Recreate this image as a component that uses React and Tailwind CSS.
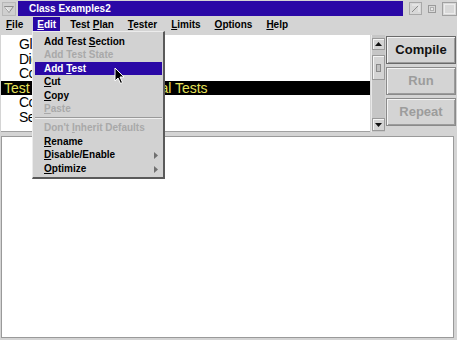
import React from "react";

const BLUE = "bg-[#2a08a6]";

function MenuRow({ children, disabled, active, arrow }) {
  return (
    <div
      className={`relative h-[13.4px] leading-[13.4px] pl-[9px] whitespace-nowrap ${
        active ? "bg-[#2a08a6] text-white" : disabled ? "text-[#a9a9a9]" : "text-black"
      }`}
    >
      {children}
      {arrow && (
        <svg className="absolute left-[119px] top-[4px]" width="4" height="7" viewBox="0 0 4 7">
          <path d="M0 0 L4 3.5 L0 7 Z" fill="#707070" />
        </svg>
      )}
    </div>
  );
}

const U = ({ children }) => <span className="underline underline-offset-[1px] decoration-1">{children}</span>;

function Btn({ children, disabled, def }) {
  return (
    <div
      className={`h-[28px] flex items-center justify-center text-[13px] font-bold bg-[#d4d4d4] border ${
        def ? "border-[#6a6a6a]" : "border-[#8a8a8a]"
      } shadow-[inset_1px_1px_0_#f4f4f4,inset_-1px_-1px_0_#9c9c9c] ${disabled ? "text-[#9c9c9c]" : "text-[#111]"}`}
    >
      {children}
    </div>
  );
}

export default function App() {
  const list = [
    { t: "Global", indent: true },
    { t: "Digital", indent: true },
    { t: "Compile", indent: true },
    { t: "Test Section: All Functional Tests", sel: true },
    { t: "Compile", indent: true },
    { t: "Setup", indent: true },
  ];
  return (
    <div className="w-[457px] h-[340px] bg-[#d4d4d4] relative overflow-hidden font-['Liberation_Sans',Arial,sans-serif] select-none">
      {/* Title bar */}
      <div className="flex items-center h-[17px] pl-[2px]">
        <svg width="14" height="14" viewBox="0 0 14 14">
          <rect x="0.5" y="0.5" width="13" height="13" fill="#cfcfcf" stroke="#b8b8b8" />
          <path d="M2.5 4.5 H11.5 L7 10.5 Z" fill="#dadada" stroke="#8c8c8c" />
          <path d="M3.5 5 L7 9.5" stroke="#f6f6f6" />
        </svg>
        <div className={`ml-[2px] w-[386px] h-[15px] ${BLUE} text-white text-[10px] font-bold leading-[15px] pl-[11px]`}>
          Class Examples2
        </div>
        <div className="flex items-center ml-[6px] gap-[4px]">
          <svg width="13" height="13" viewBox="0 0 13 13">
            <rect x="0.5" y="0.5" width="12" height="12" fill="#d8d8d8" stroke="#a8a8a8" />
            <path d="M3 10 L10 3" stroke="#8c8c8c" />
            <path d="M3 3 H10 V10" fill="none" stroke="#f0f0f0" />
          </svg>
          <svg width="12" height="13" viewBox="0 0 12 13">
            <rect x="2.5" y="3.5" width="7" height="7" fill="#d8d8d8" stroke="#9a9a9a" />
            <rect x="4.5" y="5.5" width="3" height="3" fill="#e8e8e8" stroke="#b0b0b0" />
          </svg>
          <svg width="15" height="14" viewBox="0 0 15 14">
            <rect x="0.5" y="0.5" width="14" height="13" fill="#d8d8d8" stroke="#a0a0a0" />
            <rect x="2.5" y="2.5" width="10" height="9" fill="none" stroke="#ececec" />
          </svg>
        </div>
      </div>

      {/* Menu bar */}
      <div className="flex h-[15px] pl-[2px] gap-[6px] text-[10px] font-bold text-black leading-[15px]">
        <div className="px-[4px]"><U>F</U>ile</div>
        <div className={`px-[4px] ${BLUE} text-white`}><U>E</U>dit</div>
        <div className="px-[4px]">Test <U>P</U>lan</div>
        <div className="px-[4px]"><U>T</U>ester</div>
        <div className="px-[4px]"><U>L</U>imits</div>
        <div className="px-[4px]"><U>O</U>ptions</div>
        <div className="px-[4px]"><U>H</U>elp</div>
      </div>

      {/* Upper area */}
      <div className="flex mt-[3px] h-[97px]">
        <div className="ml-[1px] w-[369px] bg-white border-b border-[#a0a0a0] pt-[2px] text-[14px] leading-[14.6px]">
          {list.map((r, i) => (
            <div
              key={i}
              className={`h-[14.6px] whitespace-nowrap ${r.indent ? "pl-[18px] tracking-[-0.5px]" : "pl-[3px]"} ${
                r.sel ? "bg-black text-[#e6e25a]" : "text-black"
              }`}
            >
              {r.t}
            </div>
          ))}
        </div>
        <div className="w-[14px] ml-[1px] bg-[#c6c6c6] border-l border-[#e8e8e8] flex flex-col">
          <div className="mt-[3px] h-[12px] bg-[#d4d4d4] border border-[#9a9a9a] shadow-[inset_1px_1px_0_#f4f4f4] flex items-center justify-center">
            <svg width="7" height="4" viewBox="0 0 7 4"><path d="M0 4 L3.5 0 L7 4 Z" fill="#111" /></svg>
          </div>
          <div className="mt-[5px] h-[25px] bg-[#d4d4d4] border border-[#9a9a9a] shadow-[inset_1px_1px_0_#f4f4f4] flex items-center justify-center">
            <div className="w-[5px] h-[8px] border border-[#8a8a8a] bg-[#c0c0c0]" />
          </div>
          <div className="flex-1" />
          <div className="mb-[1px] h-[13px] bg-[#d4d4d4] border border-[#9a9a9a] shadow-[inset_1px_1px_0_#f4f4f4] flex items-center justify-center">
            <svg width="7" height="4" viewBox="0 0 7 4"><path d="M0 0 L3.5 4 L7 0 Z" fill="#111" /></svg>
          </div>
        </div>
        <div className="ml-[1px] w-[70px] flex flex-col gap-[3px] pt-[1px]">
          <Btn def>Compile</Btn>
          <Btn disabled>Run</Btn>
          <Btn disabled>Repeat</Btn>
        </div>
      </div>

      {/* Lower panel */}
      <div className="mt-[4px] ml-[1px] w-[453px] h-[202px] bg-white border border-[#9a9a9a]" />

      {/* Edit dropdown */}
      <div className="absolute left-[32px] top-[31px] w-[133px] bg-[#d2d2d2] border-t border-l border-t-[#ececec] border-l-[#ececec] border-r-2 border-b-2 border-r-[#5a5a5a] border-b-[#5a5a5a] pt-[3px] pb-[2px] pl-[2px] pr-[1px] text-[10px] font-bold">
        <MenuRow>Add Test <U>S</U>ection</MenuRow>
        <MenuRow disabled>Add Test State</MenuRow>
        <MenuRow active>Add <U>T</U>est</MenuRow>
        <MenuRow><U>C</U>ut</MenuRow>
        <MenuRow><U>C</U>opy</MenuRow>
        <MenuRow disabled><U>P</U>aste</MenuRow>
        <div className="h-[6px] flex items-center">
          <div className="w-full border-t border-[#9a9a9a] border-b border-b-[#f0f0f0]" />
        </div>
        <MenuRow disabled>Don't <U>I</U>nherit Defaults</MenuRow>
        <MenuRow><U>R</U>ename</MenuRow>
        <MenuRow arrow><U>D</U>isable/Enable</MenuRow>
        <MenuRow arrow><U>O</U>ptimize</MenuRow>
      </div>

      {/* Mouse cursor */}
      <svg className="absolute left-[114px] top-[67px]" width="12" height="18" viewBox="0 0 12 18">
        <path d="M1 1 L1 14 L4 11 L6.5 16.5 L8.5 15.5 L6 10 L10 10 Z" fill="#000" stroke="#fff" strokeWidth="1" />
      </svg>
    </div>
  );
}
